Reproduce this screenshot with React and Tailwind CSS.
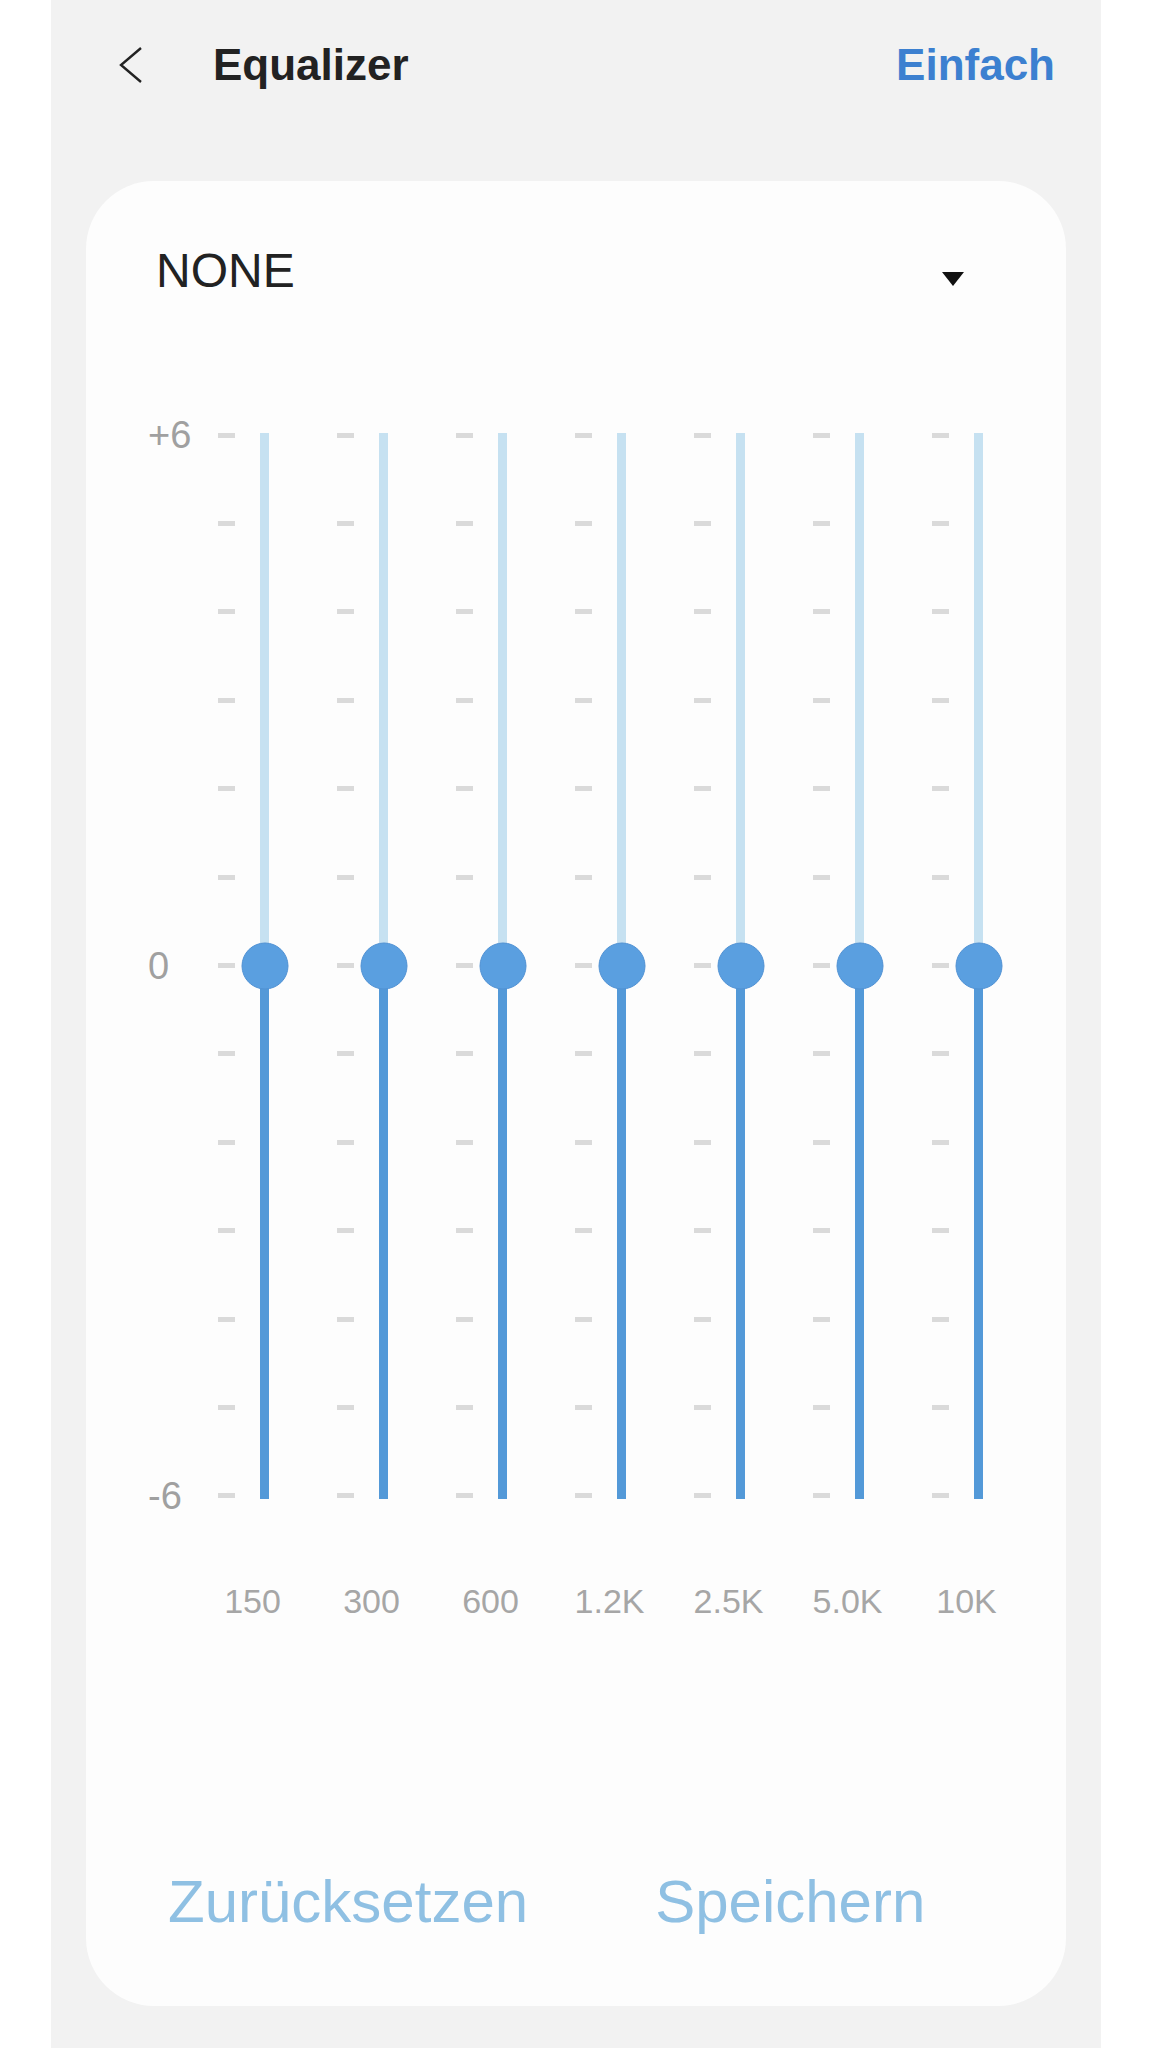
const bands = ['150', '300', '600', '1.2K', '2.5K', '5.0K', '10K'];
const levels = ['+6', '0', '-6'];

function Ticks() {
  return (
    <div className="flex h-full w-[17px] flex-col justify-between">
      {Array.from({ length: 13 }).map((_, i) => (
        <div key={i} className="h-[5px] w-[17px] bg-[#dadada]" />
      ))}
    </div>
  );
}

// one band: tick scale on the left, track with the knob at 0 dB
function BandSlider() {
  return (
    <div className="flex h-[1066px] w-[51px] gap-[25px]">
      <Ticks />
      <div className="relative flex h-full w-[9px] flex-col">
        <div className="flex-1 bg-[#c6e1f1]" />
        <div className="flex-1 bg-[#5399d8]" />
        <div className="absolute left-1/2 top-1/2 h-[47px] w-[47px] -translate-x-1/2 -translate-y-1/2 rounded-full border-[1.5px] border-[#5192d4] bg-[#5a9fe0]" />
      </div>
    </div>
  );
}

export default function App() {
  return (
    <div className="flex min-h-[2048px] justify-center bg-white font-['Liberation_Sans',Arial,sans-serif]">
      <div className="flex w-[1050px] flex-col bg-[#f2f2f2]">
        <header className="flex h-[129px] items-center pl-[66px] pr-[46px]">
          <svg width="26" height="38" viewBox="0 0 26 38" fill="none">
            <polyline points="24,2 4,19 24,36" stroke="#222" strokeWidth="2.4" strokeLinejoin="miter" />
          </svg>
          <h1 className="ml-[70px] text-[44px] font-bold leading-none text-[#222]">Equalizer</h1>
          <button className="ml-auto text-[44px] font-bold leading-none text-[#3c80d0]">Einfach</button>
        </header>

        <div className="mx-[35px] mt-[52px] flex flex-col rounded-[68px] bg-[#fdfdfd] pb-[74px] pt-[66px]">
          <div className="flex items-start justify-between pl-[70px] pr-[102px]">
            <span className="text-[48px] leading-none text-[#222]">NONE</span>
            <svg className="mt-[25px]" width="22" height="14" viewBox="0 0 22 14">
              <polygon points="0,0 22,0 11,14" fill="#111" />
            </svg>
          </div>

          <div className="ml-[62px] mt-[120px] flex items-center">
            <div className="flex h-[1101px] w-[70px] flex-col justify-between">
              {levels.map((l) => (
                <span key={l} className="text-[38px] leading-[40px] text-[#a0a0a0]">{l}</span>
              ))}
            </div>
            <div className="flex gap-[68px]">
              {bands.map((b) => (
                <BandSlider key={b} />
              ))}
            </div>
          </div>

          <div className="ml-[132px] mt-[68px] flex gap-[50px]">
            {bands.map((b) => (
              <div key={b} className="flex w-[69px] justify-center whitespace-nowrap text-[34px] leading-none text-[#a6a6a6]">
                {b}
              </div>
            ))}
          </div>

          <div className="mt-[254px] flex gap-[127px] pl-[82px]">
            <button className="text-[60px] leading-none text-[#8fc0e3]">Zurücksetzen</button>
            <button className="text-[60px] leading-none text-[#8fc0e3]">Speichern</button>
          </div>
        </div>
      </div>
    </div>
  );
}
